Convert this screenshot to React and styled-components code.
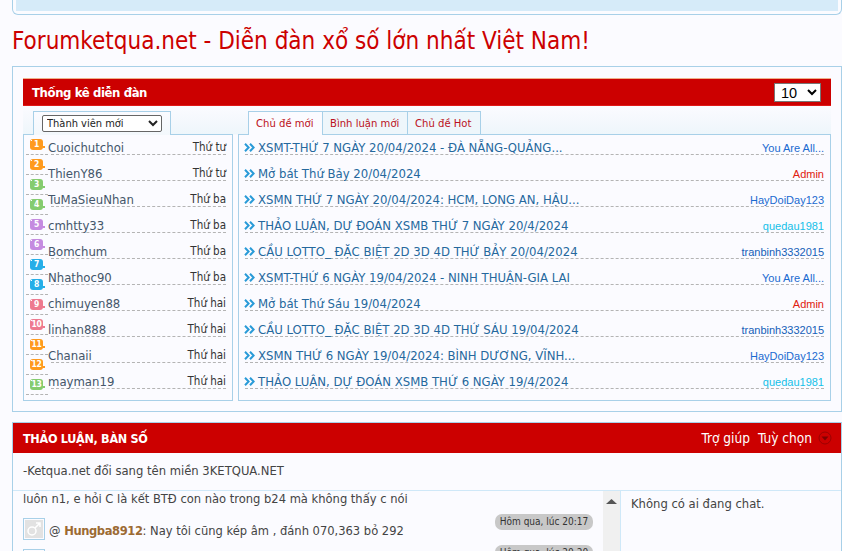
import React from "react";
import styled, { createGlobalStyle } from "styled-components";

const Global = createGlobalStyle`
  html, body { margin: 0; padding: 0; height: 551px; overflow: hidden; background: #fbfbff; }
  body { font-family: "DejaVu Sans Condensed", "DejaVu Sans", Verdana, sans-serif; font-stretch: condensed; font-size: 13px; color: #333; }
  * { box-sizing: border-box; }
`;
const Page = styled.div`
  padding: 0 0 0 12px;
  display: flex;
  flex-direction: column;
  width: 842px;
`;
const TopBox = styled.div`
  height: 15px;
  border: 1px solid #a8d0e8;
  border-top: 0;
  border-radius: 0 0 6px 6px;
  padding: 0 3px 3px;
  width: 830px;
  background: #fbfbff;
`;
const TopInner = styled.div`
  height: 100%;
  background: #d6ebf9;
`;
const Title = styled.h1`
  margin: 11px 0 0;
  height: 40px;
  font-size: 24px;
  line-height: 30px;
  font-weight: 400;
  color: #cc0000;
  white-space: nowrap;
`;
const StatsPanel = styled.section`
  width: 830px;
  height: 346px;
  border: 1px solid #a8d0e8;
  padding: 11px 10px 10px;
  display: flex;
  flex-direction: column;
`;
const RedBar = styled.div`
  height: 28px;
  background: #cc0000;
  border-top: 1px solid #eeb08a;
  border-bottom: 1px solid #e01818;
  display: flex;
  align-items: center;
  justify-content: space-between;
  padding: 0 10px 0 9px;
  color: #fff;
`;
const BarTitle = styled.b`
  font-size: 13px;
  font-weight: 700;
  letter-spacing: -0.4px;
`;
const LimitSelect = styled.select`
  width: 47px;
  height: 19px;
  font: 14.5px "Liberation Sans", sans-serif;
  background: #fff;
  color: #000;
  border: 1px solid #777;
  padding: 0 0 0 2px;
`;
const Columns = styled.div`
  flex: 1;
  display: grid;
  grid-template-columns: 210px 593px;
  gap: 5px;
  background: linear-gradient(#fbfbff 0, #eef6fb 28px, #fbfbff 29px);
`;
const Col = styled.div`
  display: flex;
  flex-direction: column;
`;
const TabRow = styled.div`
  height: 29px;
  padding: 5px 0 0 10px;
  display: flex;
  align-items: stretch;
  margin-bottom: -1px;
  position: relative;
  z-index: 1;
`;
const SelectTab = styled.div`
  width: 138px;
  border: 1px solid #a8d0e8;
  border-bottom: 0;
  background: linear-gradient(#fbfbff, #f3f8fc);
  padding: 3px 0 0 8px;
`;
const MemberSelect = styled.select`
  width: 120px;
  height: 17px;
  font: 11px "DejaVu Sans Condensed", "DejaVu Sans", sans-serif;
  font-stretch: condensed;
  background: #fff;
  color: #222;
  border: 1px solid #666;
  border-radius: 2px;
  padding: 0;
`;
const Tab = styled.div`
  padding: 0 7px;
  width: ${p => p.$w}px;
  border: 1px solid #a8d0e8;
  border-left-width: ${p => (p.$first ? 1 : 0)}px;
  border-bottom-width: ${p => (p.$active ? 0 : 1)}px;
  background: ${p => (p.$active ? "#fbfbff" : "#eef6fb")};
  color: #bb1122;
  font-size: 11.2px;
  line-height: 23px;
  white-space: nowrap;
`;
const ListBox = styled.div`
  flex: 1;
  position: relative;
  border: 1px solid #a8d0e8;
  padding: 0 6px 0 ${p => p.$left}px;
`;
const Row = styled.div`
  height: ${p => (p.$first ? 20 : 26)}px;
  display: flex;
  align-items: flex-end;
  justify-content: space-between;
  line-height: 13px;
  border-bottom: 1px dashed #b4b4b4;
`;
const MemberName = styled.span`
  color: #44566a;
  font-size: 13px;
  margin-left: -3px;
`;
const MemberDay = styled.span`
  color: #333;
  font-size: 11.5px;
`;
const RankColumn = styled.div`
  position: absolute;
  left: 2px;
  top: 0;
  width: 22px;
`;
const RankRow = styled.div`
  height: 20px;
  border-bottom: 1px dashed #b4b4b4;
  padding: 4px 0 0 4px;
`;
const RankBadge = styled.span`
  position: relative;
  display: block;
  width: 13px;
  height: 11px;
  border-radius: 3px;
  background: ${p => p.$c};
  color: #fff;
  font: 700 8.5px/11px "DejaVu Sans Condensed", "DejaVu Sans", sans-serif;
  letter-spacing: -0.3px;
  text-align: center;
  &::before {
    content: "";
    position: absolute;
    left: 1px;
    top: 1px;
    width: 1px;
    height: 1px;
    background: #fff;
  }
  &::after {
    content: "";
    position: absolute;
    right: -2px;
    top: 7px;
    width: 2px;
    height: 2px;
    background: ${p => p.$c};
  }
`;
const Topic = styled.span`
  display: flex;
  align-items: center;
  gap: 2px;
  color: #25689d;
  font-size: 13px;
  white-space: nowrap;
  margin-left: -1px;
`;
const Author = styled.span`
  color: ${p => p.$c};
  font: 11px/12px "Liberation Sans", Arial, sans-serif;
  white-space: nowrap;
`;
const ChatPanel = styled.section`
  margin-top: 10px;
  width: 830px;
  flex: 1;
  border: 1px solid #a8d0e8;
  border-bottom: 0;
`;
const ChatBar = styled.div`
  height: 30px;
  background: #cc0000;
  color: #fff;
  display: flex;
  align-items: center;
  justify-content: space-between;
  padding: 0 9px 0 10px;
`;
const ChatTitle = styled.b`
  font-size: 12.5px;
  letter-spacing: -0.3px;
`;
const ChatActions = styled.div`
  display: flex;
  align-items: center;
  gap: 8px;
  font-size: 13.6px;
`;
const ActionIcon = styled.svg`
  width: 14px;
  height: 14px;
  margin-left: -2px;
`;
const Notice = styled.div`
  height: 38px;
  padding: 9px 10px 0;
  font-size: 12.9px;
  line-height: 18px;
  color: #444;
  border-bottom: 1px solid #cfe8f8;
`;
const ChatBody = styled.div`
  display: grid;
  grid-template-columns: 590px 17px 1fr;
  height: 80px;
  overflow: hidden;
`;
const Messages = styled.div`
  padding: 0 10px;
  font-size: 12.8px;
  color: #444;
`;
const MessageLine = styled.div`
  height: 18px;
  line-height: 16px;
  white-space: nowrap;
`;
const MessageRow = styled.div`
  margin-top: ${p => p.$mt}px;
  display: flex;
  align-items: center;
  gap: 4px;
  height: 22px;
  position: relative;
  white-space: nowrap;
`;
const Avatar = styled.span`
  width: 22px;
  height: 22px;
  border: 1px solid #a8d0e8;
  padding: 1px;
  flex: none;
`;
const AvatarFill = styled.svg`
  display: block;
  width: 18px;
  height: 18px;
  background: #e2e2e2;
`;
const MessageText = styled.span`
  padding-top: 2px;
`;
const Nick = styled.b`
  color: #9c6a33;
  letter-spacing: -0.4px;
`;
const TimePill = styled.span`
  position: absolute;
  right: 0;
  top: -4px;
  width: 98px;
  height: 16px;
  border-radius: 7px;
  background: #c8c8c8;
  color: #333;
  font-size: 10px;
  line-height: 16px;
  text-align: center;
`;
const Scrollbar = styled.div`
  background: #f0f0f0;
  padding: 8px 0 0 3px;
`;
const ScrollArrow = styled.svg`
  display: block;
  width: 11px;
  height: 5px;
`;
const Online = styled.div`
  border-left: 1px solid #cfe8f8;
  padding: 5px 10px;
  font-size: 12.9px;
  color: #444;
`;

const Chev = () => (
  <svg width="12" height="9" viewBox="0 0 12 9" fill="none" stroke="#2a9bd8" strokeWidth="2">
    <path d="M1 .8 4.6 4.5 1 8.2M6 .8 9.6 4.5 6 8.2" />
  </svg>
);

const members = [
  ["Cuoichutchoi", "Thứ tư"], ["ThienY86", "Thứ tư"], ["TuMaSieuNhan", "Thứ ba"], ["cmhtty33", "Thứ ba"],
  ["Bomchum", "Thứ ba"], ["Nhathoc90", "Thứ ba"], ["chimuyen88", "Thứ hai"], ["linhan888", "Thứ hai"],
  ["Chanaii", "Thứ hai"], ["mayman19", "Thứ hai"],
];
const rankColors = ["#ff9a1e", "#ff9a1e", "#85cc6f", "#85cc6f", "#c58be0", "#c58be0", "#25aee8", "#25aee8", "#ee7a8f", "#ee7a8f", "#ff9a1e", "#ff9a1e", "#85cc6f"];
const blue = "#1a6ad0", red = "#e0200f", cyan = "#14c0e8", navy = "#1560b8";
const topics = [
  ["XSMT-THỨ 7 NGÀY 20/04/2024 - ĐÀ NẴNG-QUẢNG...", "You Are All...", blue],
  ["Mở bát Thứ Bảy 20/04/2024", "Admin", red],
  ["XSMN THỨ 7 NGÀY 20/04/2024: HCM, LONG AN, HẬU...", "HayDoiDay123", blue],
  ["THẢO LUẬN, DỰ ĐOÁN XSMB THỨ 7 NGÀY 20/4/2024", "quedau1981", cyan],
  ["CẦU LOTTO_ ĐẶC BIỆT 2D 3D 4D THỨ BẢY 20/04/2024", "tranbinh3332015", navy],
  ["XSMT-THỨ 6 NGÀY 19/04/2024 - NINH THUẬN-GIA LAI", "You Are All...", blue],
  ["Mở bát Thứ Sáu 19/04/2024", "Admin", red],
  ["CẦU LOTTO_ ĐẶC BIỆT 2D 3D 4D THỨ SÁU 19/04/2024", "tranbinh3332015", navy],
  ["XSMN THỨ 6 NGÀY 19/04/2024: BÌNH DƯƠNG, VĨNH...", "HayDoiDay123", blue],
  ["THẢO LUẬN, DỰ ĐOÁN XSMB THỨ 6 NGÀY 19/4/2024", "quedau1981", cyan],
];

export default function App() {
  return (
    <Page>
      <Global />
      <TopBox><TopInner /></TopBox>
      <Title>Forumketqua.net - Diễn đàn xổ số lớn nhất Việt Nam!</Title>
      <StatsPanel>
        <RedBar>
          <BarTitle>Thống kê diễn đàn</BarTitle>
          <LimitSelect defaultValue="10"><option>10</option></LimitSelect>
        </RedBar>
        <Columns>
          <Col>
            <TabRow>
              <SelectTab>
                <MemberSelect><option>Thành viên mới</option></MemberSelect>
              </SelectTab>
            </TabRow>
            <ListBox $left={27}>
              <RankColumn>
                {rankColors.map((c, i) => (
                  <RankRow key={i}><RankBadge $c={c}>{i + 1}</RankBadge></RankRow>
                ))}
              </RankColumn>
              {members.map(([n, d], i) => (
                <Row key={n} $first={i === 0}><MemberName>{n}</MemberName><MemberDay>{d}</MemberDay></Row>
              ))}
            </ListBox>
          </Col>
          <Col>
            <TabRow>
              <Tab $w={75} $first $active>Chủ đề mới</Tab>
              <Tab $w={85}>Bình luận mới</Tab>
              <Tab $w={73}>Chủ đề Hot</Tab>
            </TabRow>
            <ListBox $left={6}>
              {topics.map(([t, a, c], i) => (
                <Row key={t} $first={i === 0}><Topic><Chev />{t}</Topic><Author $c={c}>{a}</Author></Row>
              ))}
            </ListBox>
          </Col>
        </Columns>
      </StatsPanel>
      <ChatPanel>
        <ChatBar>
          <ChatTitle>THẢO LUẬN, BÀN SỐ</ChatTitle>
          <ChatActions>
            <span>Trợ giúp</span>
            <span>Tuỳ chọn</span>
            <ActionIcon viewBox="0 0 14 14" fill="none">
              <circle cx="7" cy="7" r="6" stroke="#9c0000" />
              <path d="M3.5 5.5h7L7 9.5z" fill="#800000" />
            </ActionIcon>
          </ChatActions>
        </ChatBar>
        <Notice>-Ketqua.net đổi sang tên miền 3KETQUA.NET</Notice>
        <ChatBody>
          <Messages>
            <MessageLine>luôn n1, e hỏi C là kết BTĐ con nào trong b24 mà không thấy c nói</MessageLine>
            <MessageRow $mt={9}>
              <Avatar>
                <AvatarFill viewBox="0 0 18 18" fill="none" stroke="#fff" strokeWidth="1.5">
                  <circle cx="7" cy="11" r="4" />
                  <path d="M10 8l5-5M11 3h4v4" />
                </AvatarFill>
              </Avatar>
              <MessageText>@ <Nick>Hungba8912</Nick>: Nay tôi cũng kép âm , đánh 070,363 bỏ 292</MessageText>
              <TimePill>Hôm qua, lúc 20:17</TimePill>
            </MessageRow>
            <MessageRow $mt={9}>
              <Avatar />
              <TimePill>Hôm qua, lúc 20:20</TimePill>
            </MessageRow>
          </Messages>
          <Scrollbar>
            <ScrollArrow viewBox="0 0 11 5"><path d="M5.5 0 11 5H0z" fill="#555" /></ScrollArrow>
          </Scrollbar>
          <Online>Không có ai đang chat.</Online>
        </ChatBody>
      </ChatPanel>
    </Page>
  );
}
